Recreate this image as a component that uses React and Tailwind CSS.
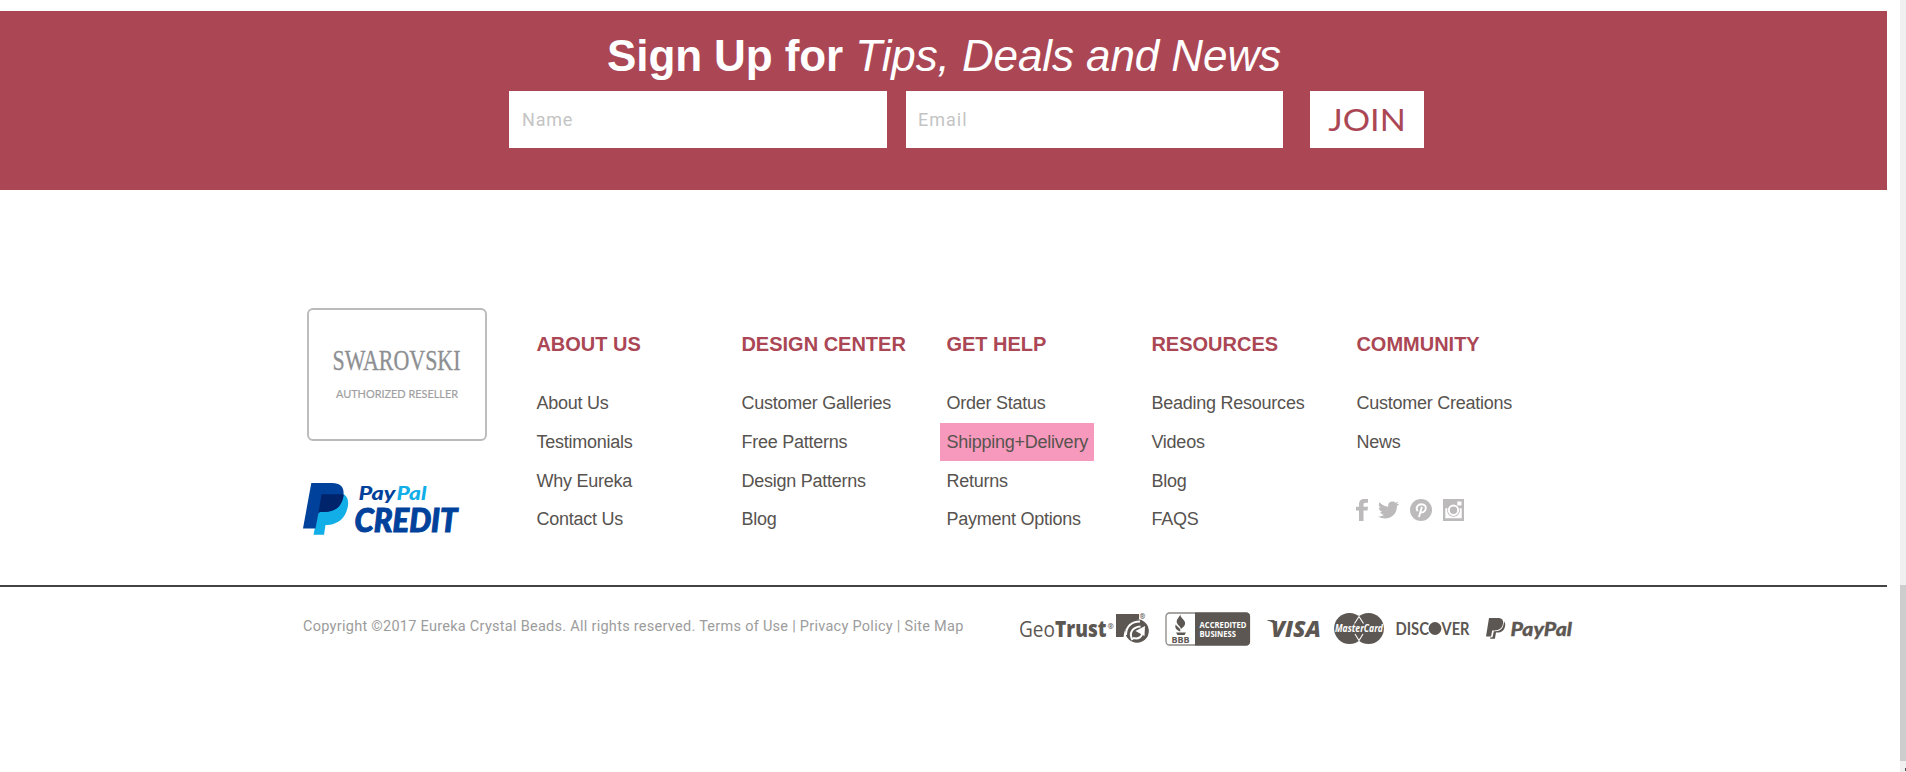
import React from "react";

const columns = [
  { title: "ABOUT US", links: ["About Us", "Testimonials", "Why Eureka", "Contact Us"] },
  { title: "DESIGN CENTER", links: ["Customer Galleries", "Free Patterns", "Design Patterns", "Blog"] },
  { title: "GET HELP", links: ["Order Status", "Shipping+Delivery", "Returns", "Payment Options"] },
  { title: "RESOURCES", links: ["Beading Resources", "Videos", "Blog", "FAQS"] },
  { title: "COMMUNITY", links: ["Customer Creations", "News"] },
];

function SwarovskiBadge() {
  return (
    <svg width="180" height="133" viewBox="0 0 180 133" className="block overflow-visible">
      <rect x="1" y="1" width="178" height="131" rx="5" fill="#fff" stroke="#bababc" strokeWidth="1.9" />
      <text x="25.500" y="62" fontFamily="Liberation Serif, serif" fontSize="29" fill="#8d8f92" stroke="#8d8f92" strokeWidth="0.3" textLength="128" lengthAdjust="spacingAndGlyphs">SWAROVSKI</text>
      <text x="29" y="90" fontFamily="Lato, sans-serif" fontSize="11.800" fill="#a0a0a2" stroke="#a0a0a2" strokeWidth="0.2" textLength="122" lengthAdjust="spacingAndGlyphs">AUTHORIZED RESELLER</text>
    </svg>
  );
}

function PayPalCredit() {
  return (
    <svg width="160" height="54" viewBox="0 0 160 54" className="block">
      <path d="M41 11.200C45 14 46 19 44.500 25c-2.300 10-9 16-19.500 17h-2.500L21 51.800H10.500L17 20Z" fill="#12aee8" />
      <path d="M8.300 0H29c9.800 0 12.800 5.500 11.200 13.500C38 24.500 31 29 20.500 29h-2.700c-1.500 0-2.300.8-2.600 2.300L12.500 45.500H0Z" fill="#00429b" />
      <path d="M18.500 11.300h19.800c1 0 1.800.2 2.400.5-1.400 12.200-8.800 17.200-20.200 17.200h-2.700c-1.300 0-2 .5-2.400 1.500Z" fill="#00246b" />
      <g fontFamily="Lato, sans-serif" fontStyle="italic" fontWeight="900">
        <text x="55.500" y="16.700" fontSize="18.500" textLength="37" lengthAdjust="spacingAndGlyphs" fill="#00429b">Pay</text>
        <text x="93.500" y="16.700" fontSize="18.500" textLength="30" lengthAdjust="spacingAndGlyphs" fill="#12aee8">Pal</text>
        <text x="51.500" y="48.500" fontSize="31.500" textLength="103" lengthAdjust="spacingAndGlyphs" fill="#00429b" stroke="#00429b" strokeWidth="1">CREDIT</text>
      </g>
    </svg>
  );
}

function SocialIcons() {
  return (
    <div className="mt-[36.500px] flex h-[22px] text-[#bcbaba]">
      <svg width="12" height="22" viewBox="0 0 12 22" fill="currentColor">
        <path d="M3 22V11.500H0V7.700h3V5.500C3 1.800 4.900 0 8.300 0H12v3.800H9.600c-1.600 0-2.100.7-2.100 2.100v1.800H12l-.5 3.800h-4V22Z" />
      </svg>
      <svg width="21" height="22" viewBox="0 0 21 22" fill="currentColor" className="ml-[10px]">
        <path d="M21 4.900c-.6.9-1.300 1.600-2.100 2.200C19.100 14 14 19.500 7 19.500c-2.600 0-5-.7-7-2 2.300.2 4.500-.4 6.200-1.700-1.900-.1-3.400-1.300-3.900-2.900.7.100 1.300.1 1.900-.1C2.100 12.300.9 10.500.9 8.500c.6.3 1.200.5 1.900.5C.9 7.600.3 5.200 1.500 3.300c2.100 2.500 5.200 4.200 8.800 4.400C9.500 4.500 11.800 2.500 14.300 2.500c1.300 0 2.400.5 3.200 1.300.9-.2 1.800-.5 2.700-1-.3 1-.9 1.800-1.800 2.400.9-.1 1.700-.3 2.600-.3Z" />
      </svg>
      <svg width="22" height="22" viewBox="0 0 22 22" fill="none" className="ml-[11px]">
        <circle cx="11" cy="11" r="11" fill="currentColor" />
        <path d="M7.300 11.500C5.500 8.500 7.800 5.300 11.500 5.300c3.300 0 4.700 2.200 4.200 4.600-.6 3.200-3.800 4.400-5.300 2.600M11.700 8.500 9.200 17.300" stroke="#fff" strokeWidth="1.900" strokeLinecap="round" />
      </svg>
      <svg width="21" height="22" viewBox="0 0 21 22" className="ml-[11px]">
        <path fillRule="evenodd" d="M0 0h21v22H0ZM2.300 9.300v9.900h16.400V9.300h-2.300a6.300 6.300 0 1 1-11.800 0ZM14.300 2.600v4h4.200v-4Z" fill="currentColor" />
        <circle cx="10.500" cy="11.300" r="4.700" fill="#bcbaba" stroke="#fff" strokeWidth="2" />
      </svg>
    </div>
  );
}

function GeoTrust() {
  return (
    <svg width="130" height="36" viewBox="0 0 130 36" className="block">
      <g fill="#5c5752" fontFamily="Open Sans, sans-serif" fontSize="22">
        <text x="-1" y="26.800" textLength="36" lengthAdjust="spacingAndGlyphs">Geo</text>
        <text x="35" y="26.800" fontWeight="800" textLength="51.500" lengthAdjust="spacingAndGlyphs">Trust</text>
        <text x="87.500" y="18.800" fontSize="7.500" fontWeight="700">®</text>
        <path d="M96 4h23v5.500c-8 1-14.500 6-15.500 17.500H96Z" />
        <circle cx="117" cy="21" r="11.800" />
        <text x="119.500" y="9" fontSize="7" fontWeight="700">®</text>
      </g>
      <path d="M106 25c0-8.500 5.500-13.500 14-13.500M112.500 30c-4-7 0-13 8-13.500M113 28c6 1.500 9-1 9.500-6" fill="none" stroke="#fff" strokeWidth="2" />
      <path d="m115.500 21 9.500-5-.5 10Z" fill="#fff" />
    </svg>
  );
}

function BBB() {
  return (
    <svg width="86" height="34" viewBox="0 0 86 34" className="block">
      <rect x="1" y="1" width="83.500" height="32" rx="3.500" fill="#fff" stroke="#8b8784" strokeWidth="1.300" />
      <path d="M30 .5h51a4 4 0 0 1 4 4v25a4 4 0 0 1-4 4H30Z" fill="#5c5752" />
      <path d="M15.500 2.500c-1 3.500 7 6 4 11-.8 1.400-2.200 2.200-3.700 3.600.4-3-6-5-3.600-9.600ZM10.800 12.500c1.500 2.800 5.200 3.300 4.500 7-3-.8-6.300-3.500-4.500-7ZM11 20.500h10L19.500 23h-7Z" fill="#5c5752" />
      <g fontFamily="Open Sans, sans-serif" fontWeight="700">
        <text x="6.500" y="31.200" fontSize="9" fill="#5c5752" textLength="18" lengthAdjust="spacingAndGlyphs">BBB</text>
        <text x="34.500" y="15.800" fontSize="8" fill="#fff" textLength="47" lengthAdjust="spacingAndGlyphs">ACCREDITED</text>
        <text x="34.500" y="25" fontSize="8" fill="#fff" textLength="36.500" lengthAdjust="spacingAndGlyphs">BUSINESS</text>
      </g>
    </svg>
  );
}

function CardLogos() {
  return (
    <svg width="310" height="36" viewBox="0 0 310 36" className="block" fill="#5c5752">
      <g fontFamily="Open Sans, sans-serif" fontWeight="800" fontStyle="italic">
        <text x="4" y="27" fontSize="23.500" textLength="50" lengthAdjust="spacingAndGlyphs">VISA</text>
        <path d="M.5 10h6.700l2.800 8C8 14 5 11.500.5 10.800Z" />
        <circle cx="82.500" cy="18.500" r="15.400" />
        <circle cx="101.500" cy="18.500" r="15.400" />
        <path d="M92 6.500l-4.500 7M92 6.500l4.500 7M88 24l4 6.500 4-6.500" fill="none" stroke="#fff" strokeWidth="1.100" />
        <text x="68" y="22.300" fontSize="10" fontWeight="700" fill="#fff" textLength="48" lengthAdjust="spacingAndGlyphs">MasterCard</text>
      </g>
      <g fontFamily="Lato, sans-serif" fontWeight="700" fontSize="16.500">
        <text x="128.500" y="24.700" textLength="33.500" lengthAdjust="spacingAndGlyphs">DISC</text>
        <circle cx="168" cy="18.500" r="6.400" />
        <text x="174.500" y="24.700" textLength="28" lengthAdjust="spacingAndGlyphs">VER</text>
      </g>
      <path d="M222 8h9c4 0 5.800 2.300 5 5.800-.9 4.700-4 6.700-8.500 6.700h-2.300l-1.200 6h-5Z" />
      <path d="M237 11.500c1.300 1.300 1.500 3 1 5-1 4-3.500 6-7.700 6H229l-1.100 6.300h-4.700l.3-1.600h2l1.300-6h1.500c5 0 8.200-2.600 8.700-9.700Z" />
      <text x="243.500" y="26" fontFamily="Lato, sans-serif" fontWeight="900" fontStyle="italic" fontSize="18.500" stroke="#5c5752" strokeWidth="0.300" textLength="61.500" lengthAdjust="spacingAndGlyphs">PayPal</text>
    </svg>
  );
}

export default function App() {
  return (
    <div className="flex h-[772px] w-full overflow-hidden bg-white font-['Liberation_Sans',Arial,sans-serif]">
      <div className="flex w-[1887px] shrink-0 flex-col pt-[11px]">
        <section className="h-[179px] bg-[#ab4755] pt-[18px]">
          <h2 className="pl-[607px] text-[44px] leading-[54px] font-bold tracking-[-0.09px] whitespace-nowrap text-white">
            Sign Up for <em className="font-normal">Tips, Deals and News</em>
          </h2>
          <form className="mt-2 flex pl-[509px] font-[Roboto,sans-serif]">
            <input placeholder="Name" className="h-[57px] w-[378px] bg-white px-[13px] text-[18px] tracking-[0.8px] placeholder:text-[#c4c4c4]" />
            <input placeholder="Email" className="ml-[19px] h-[57px] w-[377px] bg-white px-[12px] text-[18px] tracking-[1px] placeholder:text-[#c4c4c4]" />
            <button type="button" className="ml-[27px] flex h-[57px] w-[114px] items-center justify-center bg-white font-[Lato,sans-serif] text-[30px] text-[#ab4755]">
              <span className="scale-x-[1.14]">JOIN</span>
            </button>
          </form>
        </section>

        <footer className="flex h-[395px] shrink-0 pl-[303px]">
          <div className="w-[233px] pt-[118px]">
            <div className="pl-1">
              <SwarovskiBadge />
            </div>
            <div className="mt-[42px]">
              <PayPalCredit />
            </div>
          </div>
          <nav className="flex pt-[139px] pl-[0.4px]">
            {columns.map((col) => (
              <div key={col.title} className="w-[205px]">
                <h3 className="text-[20px] leading-[30px] font-bold whitespace-nowrap text-[#ab4755]">{col.title}</h3>
                <ul className="mt-[25px] text-[18px] tracking-[-0.24px] text-[#57534f]">
                  {col.links.map((link) => (
                    <li key={link} className="flex h-[39px] items-center whitespace-nowrap nth-4:h-[37px]">
                      <a
                        className={
                          link === "Shipping+Delivery"
                            ? "mb-px -ml-1.5 flex h-[38px] items-center bg-[#f799bc] px-1.5 pt-px"
                            : ""
                        }
                      >
                        {link}
                      </a>
                    </li>
                  ))}
                </ul>
                {col.title === "COMMUNITY" && <SocialIcons />}
              </div>
            ))}
          </nav>
        </footer>

        <div className="flex h-[187px] border-t-2 border-[#444543] pl-[303px]">
          <p className="w-[717px] pt-[29px] font-[Roboto,sans-serif] text-[14.500px] leading-[22px] tracking-[0.275px] whitespace-nowrap text-[#9c9c9c]">
            Copyright ©2017 Eureka Crystal Beads. All rights reserved. Terms of Use | Privacy Policy | Site Map
          </p>
          <div className="flex pt-[23px]">
            <GeoTrust />
            <div className="ml-[15px] pt-[2px]">
              <BBB />
            </div>
            <div className="ml-[16px]">
              <CardLogos />
            </div>
          </div>
        </div>
      </div>
      <div className="ml-[13px] flex w-[6px] flex-col items-end bg-[#f0f0f0] pt-[585px]">
        <div className="h-[176px] w-full bg-[#cdcdcd]" />
        <div className="mt-[7px] h-[3px] w-px bg-[#505050]" />
      </div>
    </div>
  );
}
